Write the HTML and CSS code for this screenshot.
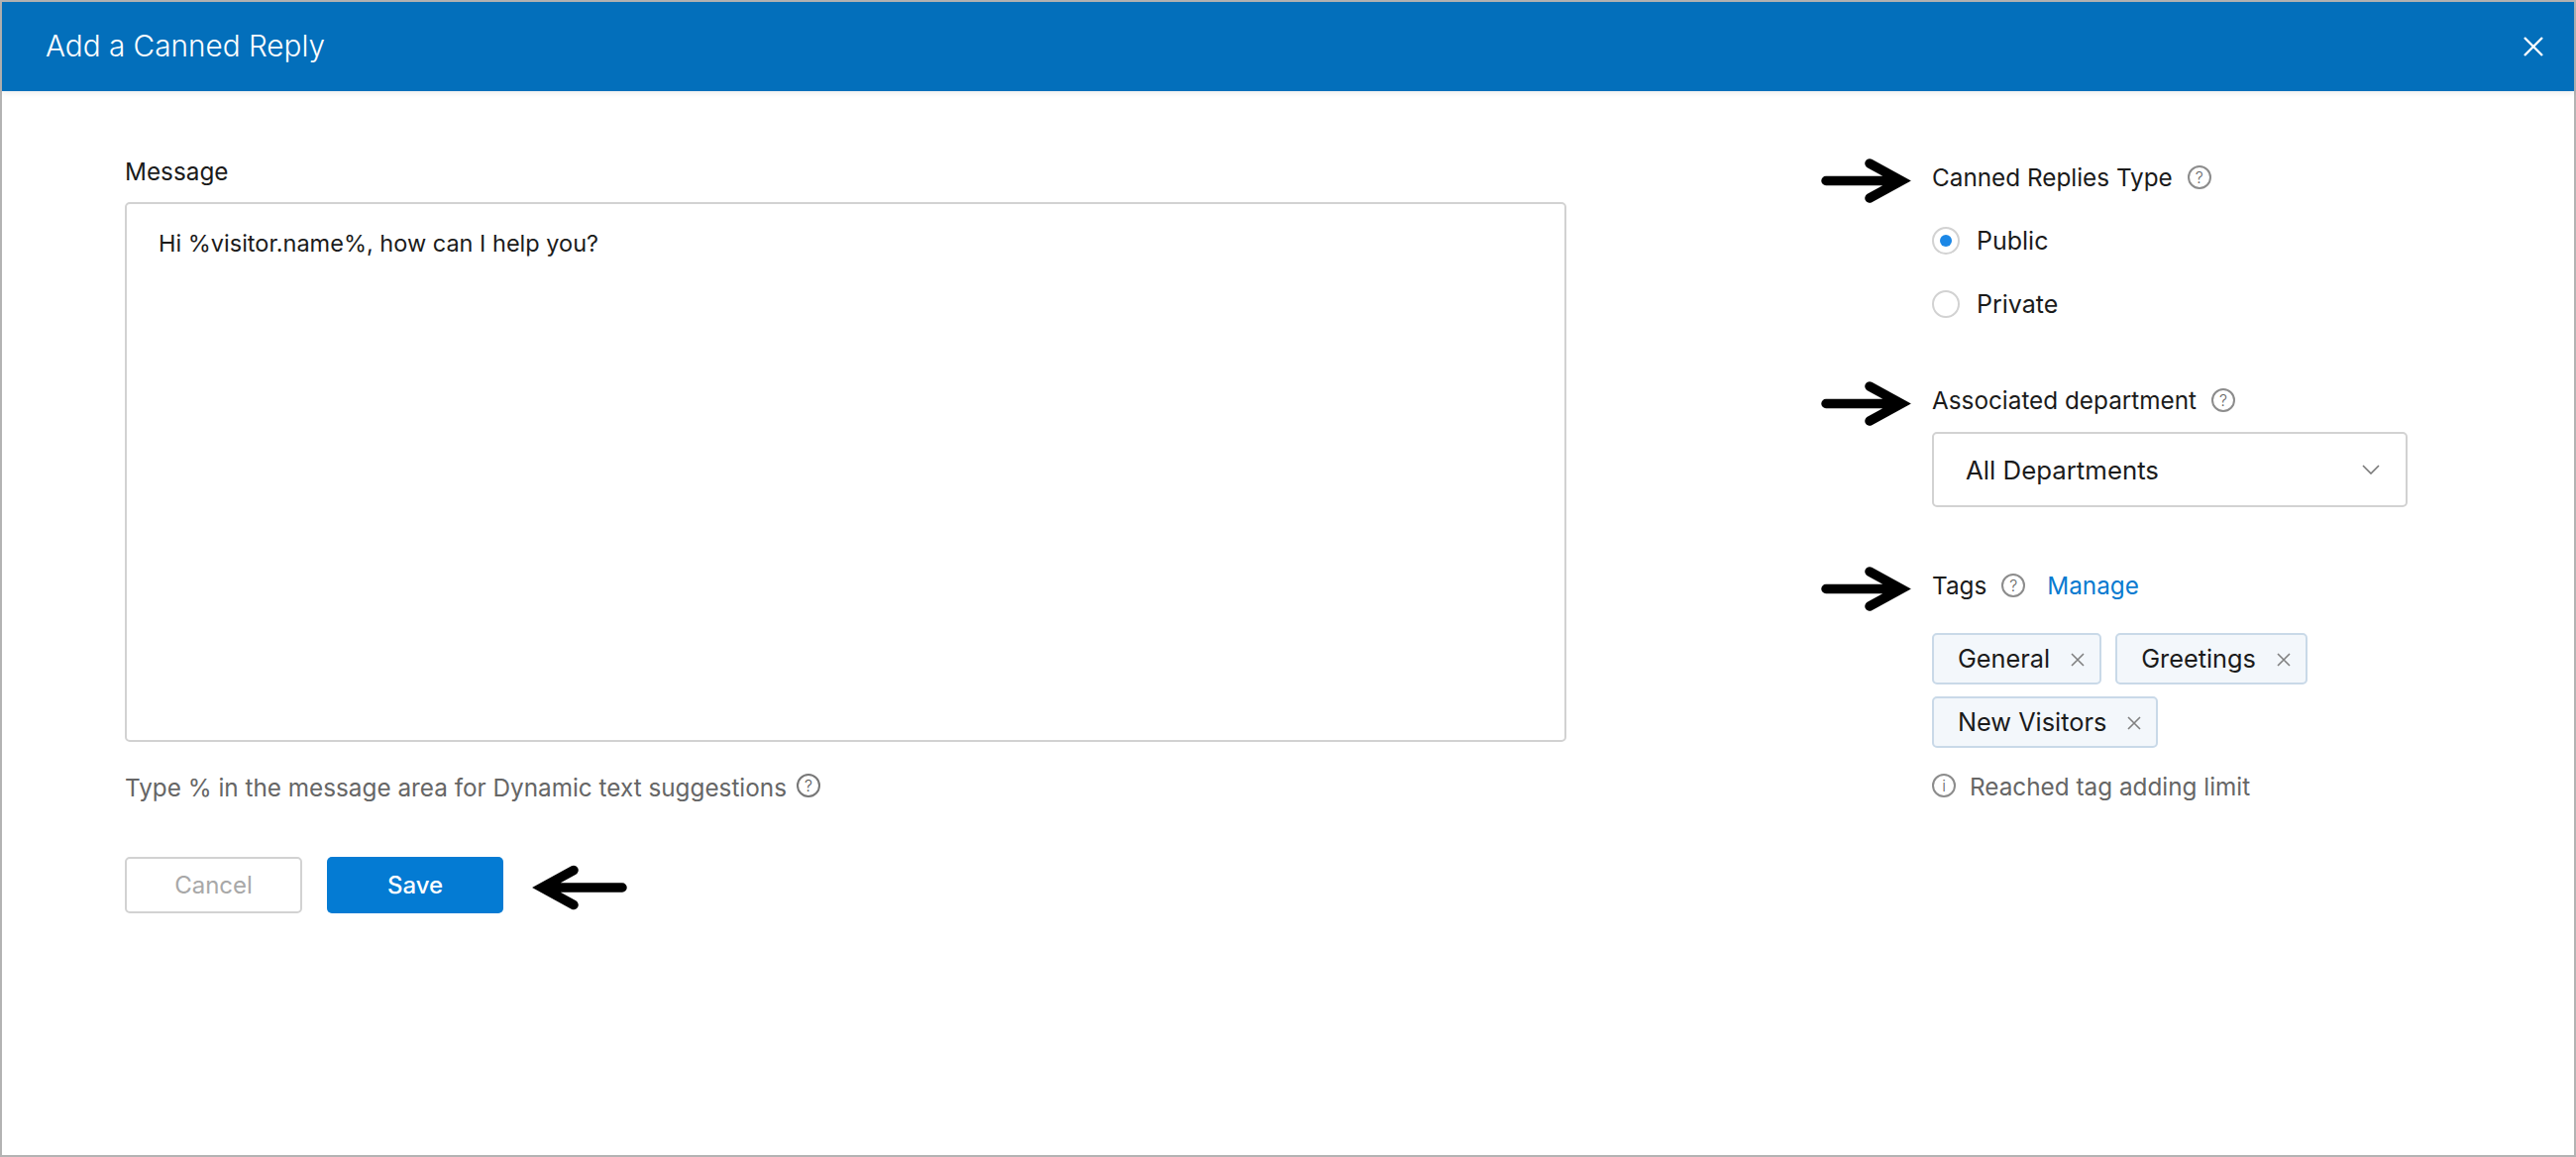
FILE: index.html
```html
<!DOCTYPE html>
<html lang="en">
<head>
<meta charset="utf-8">
<title>Add a Canned Reply</title>
<link rel="stylesheet" href="styles.css">
</head>
<body>
<div class="dialog">
  <header class="topbar">
    <h1 class="title">Add a Canned Reply</h1>
    <svg class="close" viewBox="0 0 20 20" aria-hidden="true"><path d="M1 1 19 19M19 1 1 19"/></svg>
  </header>
  <main class="content">
    <section class="left">
      <div class="label">Message</div>
      <div class="textarea">Hi %visitor.name%, how can I help you?</div>
      <div class="hint"><span>Type % in the message area for Dynamic text suggestions</span><span class="help help-dark">?</span></div>
      <div class="actions">
        <button class="btn btn-cancel">Cancel</button>
        <button class="btn btn-save">Save</button>
        <svg class="arrow arrow-left" viewBox="0 0 104 46" aria-hidden="true"><path d="M9 23H88M58 5.5 90 23 58 40.5"/></svg>
      </div>
    </section>
    <aside class="right">
      <div class="label-row">
        <svg class="arrow arrow-right" viewBox="0 0 91 47" aria-hidden="true"><path d="M5 23.5H79M49 6 81 23.5 49 41"/></svg>
        <span>Canned Replies Type</span><span class="help">?</span>
      </div>
      <div class="radios">
        <div class="radio-row"><span class="radio radio-on"></span><span>Public</span></div>
        <div class="radio-row"><span class="radio"></span><span>Private</span></div>
      </div>
      <div class="label-row label-dept">
        <svg class="arrow arrow-right" viewBox="0 0 91 47" aria-hidden="true"><path d="M5 23.5H79M49 6 81 23.5 49 41"/></svg>
        <span>Associated department</span><span class="help">?</span>
      </div>
      <div class="select">
        <span>All Departments</span>
        <svg class="chevron" viewBox="0 0 18 10" aria-hidden="true"><path d="M1 1 9 9 17 1"/></svg>
      </div>
      <div class="label-row label-tags">
        <svg class="arrow arrow-right" viewBox="0 0 91 47" aria-hidden="true"><path d="M5 23.5H79M49 6 81 23.5 49 41"/></svg>
        <span>Tags</span><span class="help">?</span><span class="manage">Manage</span>
      </div>
      <div class="tags">
        <span class="tag">General<svg class="tag-x" viewBox="0 0 14 14" aria-hidden="true"><path d="M1 1 13 13M13 1 1 13"/></svg></span>
        <span class="tag">Greetings<svg class="tag-x" viewBox="0 0 14 14" aria-hidden="true"><path d="M1 1 13 13M13 1 1 13"/></svg></span>
        <span class="tag">New Visitors<svg class="tag-x" viewBox="0 0 14 14" aria-hidden="true"><path d="M1 1 13 13M13 1 1 13"/></svg></span>
      </div>
      <div class="limit"><span class="help help-info">i</span><span>Reached tag adding limit</span></div>
    </aside>
  </main>
</div>
</body>
</html>
```
FILE: styles.css
```css
* { box-sizing: border-box; }
html, body { margin: 0; height: 100%; }
body {
  font-family: Inter, "Liberation Sans", sans-serif;
  font-size: 24.3px;
  color: #1b1b1b;
  background: #fff;
}
.dialog {
  height: 1168px;
  border: 2px solid #b3b3b3;
  display: flex;
  flex-direction: column;
  background: #fff;
}
.topbar {
  height: 90px;
  flex: none;
  display: flex;
  align-items: center;
  justify-content: space-between;
  padding: 0 31px 0 44px;
  background: #036fbb;
  box-shadow: 0 2px 6px rgba(0, 0, 0, .08);
}
.title {
  margin: 0 0 3px;
  font-size: 29.7px;
  line-height: 36px;
  font-weight: 300;
  color: #fff;
}
.close { width: 20px; height: 20px; }
.close path { fill: none; stroke: #fff; stroke-width: 2.4; }
.content {
  display: flex;
  padding: 66px 0 0 124px;
}
.left { width: 1455px; flex: none; }
.label { line-height: 30px; }
.textarea {
  margin-top: 16px;
  height: 545px;
  border: 2px solid #d2d2d2;
  border-radius: 5px;
  padding: 25px 32px;
  line-height: 30px;
  font-size: 23.5px;
}
.hint {
  margin-top: 31px;
  display: flex;
  align-items: center;
  gap: 10px;
  line-height: 30px;
  color: #666;
}
.actions {
  margin-top: 55px;
  display: flex;
  align-items: center;
  gap: 25px;
  position: relative;
}
.btn {
  height: 57px;
  border-radius: 5px;
  font: 400 24px Inter, "Liberation Sans", sans-serif;
  padding: 0;
}
.btn-cancel { width: 179px; background: #fff; border: 2px solid #d2d2d2; color: #a8a8a8; }
.btn-save { width: 178px; background: #047bd3; border: 0; color: #fff; font-weight: 500; }
.arrow { position: absolute; fill: none; }
.arrow path {
  fill: none;
  stroke: #000;
  stroke-width: 9.5;
  stroke-linecap: round;
  stroke-linejoin: miter;
}
.arrow-left {
  left: 407px;
  top: 8px;
  width: 104px;
  height: 46px;
  transform: scaleX(-1);
}
.right { width: 480px; margin-left: 369px; padding-top: 6px; flex: none; }
.label-row {
  display: flex;
  align-items: center;
  gap: 15px;
  line-height: 30px;
  position: relative;
}
.arrow-right {
  left: -112px;
  top: -5px;
  width: 91px;
  height: 47px;
}
.help {
  width: 24px;
  height: 24px;
  border: 2px solid #8c8c8c;
  border-radius: 50%;
  display: inline-flex;
  align-items: center;
  justify-content: center;
  font-size: 16px;
  font-weight: 300;
  line-height: 1;
  color: #666;
  flex: none;
}
.help-dark { border-color: #777; color: #555; transform: translateY(-2px); }
.manage { color: #0a7bd0; margin-left: 7px; }
.radios { margin-top: 34px; display: flex; flex-direction: column; gap: 34px; }
.radio-row { display: flex; align-items: center; gap: 17px; line-height: 30px; height: 30px; font-size: 25px; }
.radio {
  width: 28px;
  height: 28px;
  border: 2px solid #d2d2d2;
  border-radius: 50%;
  display: flex;
  align-items: center;
  justify-content: center;
  flex: none;
}
.radio-on::after {
  content: "";
  width: 12px;
  height: 12px;
  border-radius: 50%;
  background: #1b87e6;
}
.label-dept { margin-top: 67px; }
.select {
  margin-top: 17px;
  height: 76px;
  border: 2px solid #d2d2d2;
  border-radius: 5px;
  display: flex;
  align-items: center;
  justify-content: space-between;
  padding: 0 26px 0 32px;
  font-size: 25.8px;
}
.chevron { width: 18px; height: 10px; }
.chevron path { fill: none; stroke: #777; stroke-width: 1.6; }
.label-tags { margin-top: 64px; }
.tags { margin-top: 33px; display: flex; flex-wrap: wrap; gap: 12px 14px; }
.tag {
  height: 52px;
  display: inline-flex;
  align-items: center;
  gap: 21px;
  padding: 0 15px 2px 24px;
  border: 2px solid #c9d9e8;
  border-radius: 5px;
  background: #f3f7fb;
  font-size: 25.3px;
}
.tag-x { width: 14px; height: 14px; margin-top: 4px; }
.tag-x path { fill: none; stroke: #808080; stroke-width: 1.6; }
.limit {
  margin-top: 24px;
  display: flex;
  align-items: center;
  gap: 14px;
  line-height: 30px;
  color: #666;
}
.help-info { transform: translateY(-1px); }
```
